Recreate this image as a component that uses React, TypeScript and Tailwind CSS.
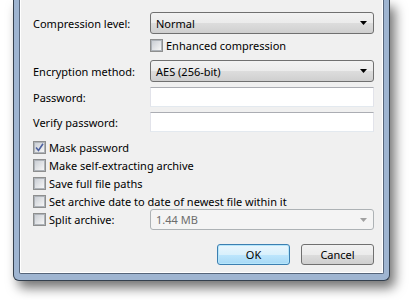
const font = "font-['Noto_Sans','Open_Sans',sans-serif]";

function Checkbox({ checked = false }: { checked?: boolean }) {
  return (
    <span className="flex h-[13px] w-[13px] shrink-0 items-center justify-center border border-[#8e8f8f] bg-[#f4f4f4]">
      <span className="flex h-[11px] w-[11px] items-center justify-center border border-[#aeb3b9] bg-gradient-to-br from-[#cbcfd5] to-[#f6f6f6]">
        {checked && (
          <svg width="9" height="9" viewBox="0 0 9 9">
            <path d="M1 4.5 L3.5 7.5 L8 0.8" fill="none" stroke="#4d61a0" strokeWidth="1.6" />
          </svg>
        )}
      </span>
    </span>
  );
}

function Combo({ value, disabled = false, h = "h-[22px]" }: { value: string; disabled?: boolean; h?: string }) {
  return (
    <div
      className={`flex w-[224px] items-center justify-between rounded-[3px] border pl-[5px] pr-[6px] ${h} ${
        disabled
          ? "border-[#adb2b5] bg-[#f4f4f4] text-[#6d6d6d]"
          : "border-[#707070] bg-[linear-gradient(#f2f2f2_0%,#ebebeb_50%,#dddddd_50%,#cfcfcf_100%)] text-black"
      }`}
    >
      <span>{value}</span>
      <svg width="7" height="4" viewBox="0 0 7 4">
        <path d="M0 0 H7 L3.5 4 Z" fill={disabled ? "#a0a0a0" : "#000"} />
      </svg>
    </div>
  );
}

function TextBox() {
  return (
    <div className="h-[20px] w-[224px] border border-t-[#abadb3] border-x-[#e2e3ea] border-b-[#e3e9ef] bg-white" />
  );
}

function CheckRow({ label, checked }: { label: string; checked?: boolean }) {
  return (
    <div className="mt-[5px] flex h-[13px] items-center gap-[3px]">
      <Checkbox checked={checked} />
      <span>{label}</span>
    </div>
  );
}

export default function App() {
  return (
    <div className={`h-[300px] w-[409px] overflow-hidden bg-white text-[11px] leading-[13px] text-black ${font}`}>
      <div className="ml-[13px] h-[281px] w-[377px] rounded-b-[6px] border-x border-b border-[#34404e] bg-[#9fb5d1] px-[5px] pb-[6px] shadow-[5px_7px_12px_rgba(0,0,0,0.55)]">
        <div className="flex h-full flex-col rounded-b-[2px] border-x border-b border-[#56657a] bg-[#f0f0f0] pl-[13px] pr-[9px] pt-[12px] shadow-[inset_1px_0_0_#ffffff,inset_-1px_0_0_#ffffff,inset_0_-1px_0_#ffffff]">
          <div className="flex h-[22px] items-center">
            <span className="w-[117px]">Compression level:</span>
            <Combo value="Normal" />
          </div>
          <div className="ml-[117px] mt-[5px] flex h-[13px] items-center gap-[3px]">
            <Checkbox />
            <span>Enhanced compression</span>
          </div>
          <div className="mt-[8px] flex h-[22px] items-center">
            <span className="w-[117px]">Encryption method:</span>
            <Combo value="AES (256-bit)" />
          </div>
          <div className="mt-[5px] flex h-[20px] items-center">
            <span className="w-[117px]">Password:</span>
            <TextBox />
          </div>
          <div className="mt-[5px] flex h-[20px] items-center">
            <span className="w-[117px]">Verify password:</span>
            <TextBox />
          </div>
          <div className="mt-[4px]">
            <CheckRow label="Mask password" checked />
            <CheckRow label="Make self-extracting archive" />
            <CheckRow label="Save full file paths" />
            <CheckRow label="Set archive date to date of newest file within it" />
          </div>
          <div className="mt-[1px] flex h-[21px] items-center">
            <div className="flex w-[117px] items-center gap-[3px]">
              <Checkbox />
              <span>Split archive:</span>
            </div>
            <Combo value="1.44 MB" disabled h="h-[21px]" />
          </div>
          <div className="mt-[14px] flex justify-end gap-[11px]">
            <button className="h-[21px] w-[73px] rounded-[3px] border border-[#3c7fb1] bg-[linear-gradient(#eaf6fd_0%,#d9f0fc_50%,#bee6fd_50%,#a7d9f5_100%)] shadow-[inset_0_0_0_1px_#b6e6fb]">
              OK
            </button>
            <button className="h-[21px] w-[73px] rounded-[3px] border border-[#707070] bg-[linear-gradient(#f2f2f2_0%,#ebebeb_50%,#dddddd_50%,#cfcfcf_100%)]">
              Cancel
            </button>
          </div>
        </div>
      </div>
    </div>
  );
}
